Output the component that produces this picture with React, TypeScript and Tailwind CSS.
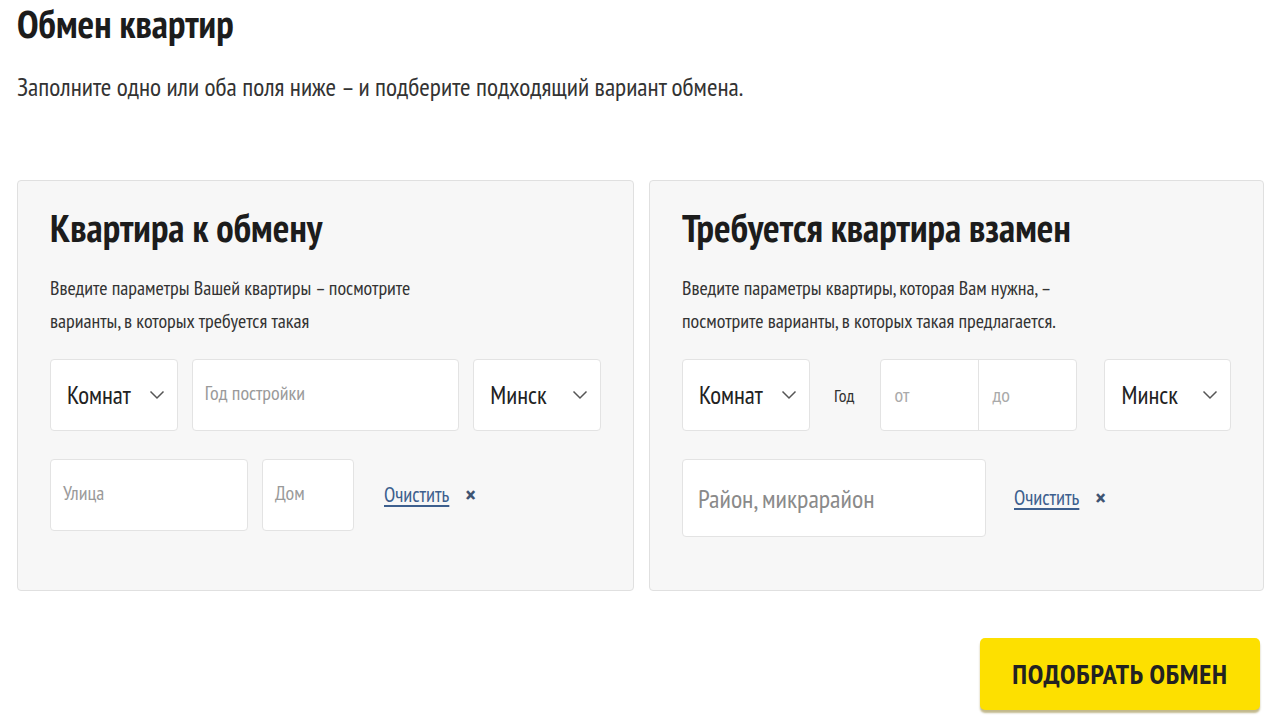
import React from "react";

const FONT = {
  fontFamily:
    '"PT Sans Narrow", "Liberation Sans Narrow", "DejaVu Sans Condensed", "Roboto Condensed", Roboto, sans-serif',
};

function Chevron() {
  return (
    <svg width="16" height="10" viewBox="0 0 16 10" fill="none" className="shrink-0">
      <path d="M1.5 1.5 L8 8 L14.5 1.5" stroke="#555" strokeWidth="1.5" />
    </svg>
  );
}

function Select({ label, className }: { label: string; className: string }) {
  return (
    <div
      className={`flex items-center justify-between bg-white border border-[#e3e3e3] rounded-[4px] pl-[16px] pr-[12px] ${className}`}
    >
      <span className="text-[25px] text-[#222]">{label}</span>
      <Chevron />
    </div>
  );
}

function Field({ placeholder, className, big }: { placeholder: string; className: string; big?: boolean }) {
  return (
    <div className={`flex items-center bg-white border border-[#e3e3e3] rounded-[4px] px-[12px] ${className}`}>
      <span className={big ? "text-[26px] text-[#8a8a8a]" : "text-[20px] text-[#9a9a9a] -mt-[4px]"}>{placeholder}</span>
    </div>
  );
}

function Clear() {
  return (
    <div className="flex items-center gap-[16px] ml-[16px]">
      <span className="text-[20.5px] text-[#3d5f8e] underline underline-offset-[3px]">Очистить</span>
      <span className="text-[24px] font-bold text-[#3f5472] leading-none">×</span>
    </div>
  );
}

export default function App() {
  return (
    <div className="w-[1280px] h-[720px] bg-white overflow-hidden" style={FONT}>
      <div className="px-[17px] pt-[4px]">
        <h1 className="text-[39px] font-bold text-[#1c1c1c] leading-[40px]">Обмен квартир</h1>
        <p className="text-[25.5px] text-[#333] mt-[30px] leading-none">
          Заполните одно или оба поля ниже – и подберите подходящий вариант обмена.
        </p>
        <div className="flex gap-[15px] mt-[80px]">
          <div className="w-[617px] h-[411px] bg-[#f7f7f7] border border-[#e0e0e0] rounded-[4px] px-[32px] pt-[23px]">
            <h2 className="text-[39px] font-bold text-[#1c1c1c] leading-tight">Квартира к обмену</h2>
            <p className="text-[20px] text-[#333] leading-[33px] mt-[20px]">
              Введите параметры Вашей квартиры – посмотрите
              <br />
              варианты, в которых требуется такая
            </p>
            <div className="flex gap-[14px] mt-[21px]">
              <Select label="Комнат" className="w-[128px] h-[72px]" />
              <Field placeholder="Год постройки" className="w-[268px] h-[72px]" />
              <Select label="Минск" className="w-[128px] h-[72px]" />
            </div>
            <div className="flex gap-[14px] mt-[28px] items-center">
              <Field placeholder="Улица" className="w-[198px] h-[72px]" />
              <Field placeholder="Дом" className="w-[92px] h-[72px]" />
              <Clear />
            </div>
          </div>
          <div className="w-[617px] h-[411px] bg-[#f7f7f7] border border-[#e0e0e0] rounded-[4px] px-[32px] pt-[23px]">
            <h2 className="text-[39px] font-bold text-[#1c1c1c] leading-tight">Требуется квартира взамен</h2>
            <p className="text-[20px] text-[#333] leading-[33px] mt-[20px]">
              Введите параметры квартиры, которая Вам нужна, –
              <br />
              посмотрите варианты, в которых такая предлагается.
            </p>
            <div className="flex mt-[21px] items-center">
              <Select label="Комнат" className="w-[128px] h-[72px]" />
              <span className="text-[18px] text-[#333] ml-[24px] mr-[26px]">Год</span>
              <div className="flex w-[197px] h-[72px] bg-white border border-[#e3e3e3] rounded-[4px]">
                <div className="flex-1 flex items-center px-[13px] border-r border-[#e3e3e3]">
                  <span className="text-[20px] text-[#aaa]">от</span>
                </div>
                <div className="flex-1 flex items-center px-[13px]">
                  <span className="text-[20px] text-[#aaa]">до</span>
                </div>
              </div>
              <Select label="Минск" className="w-[127px] h-[72px] ml-[27px]" />
            </div>
            <div className="flex gap-[14px] mt-[28px] items-center">
              <Field placeholder="Район, микрарайон" className="w-[304px] h-[78px] pl-[15px]" big />
              <div className="-ml-[2px] flex">
                <Clear />
              </div>
            </div>
          </div>
        </div>
        <div className="flex justify-end mt-[47px] pr-[3px]">
          <button className="w-[280px] h-[72px] bg-[#fde000] rounded-[5px] shadow-[0_3px_2px_rgba(120,100,0,0.45)] text-[28px] font-bold text-[#222] tracking-[0.8px]">
            ПОДОБРАТЬ ОБМЕН
          </button>
        </div>
      </div>
    </div>
  );
}
